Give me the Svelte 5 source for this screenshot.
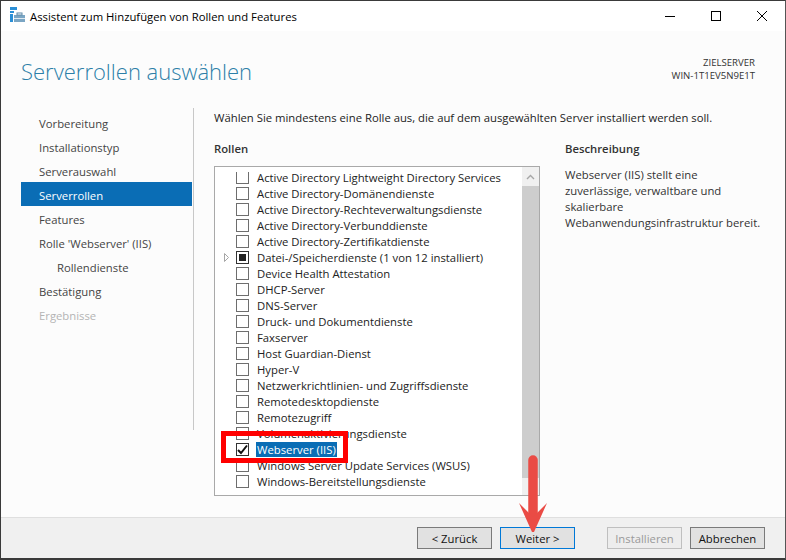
<script>
  const nav = [
    { t: 'Vorbereitung' }, { t: 'Installationstyp' }, { t: 'Serverauswahl' },
    { t: 'Serverrollen', active: true }, { t: 'Features' }, { t: "Rolle 'Webserver' (IIS)" },
    { t: 'Rollendienste', sub: true }, { t: 'Bestätigung' }, { t: 'Ergebnisse', off: true }
  ];
  const roles = [
    'Active Directory Lightweight Directory Services', 'Active Directory-Domänendienste',
    'Active Directory-Rechteverwaltungsdienste', 'Active Directory-Verbunddienste',
    'Active Directory-Zertifikatdienste', 'Datei-/Speicherdienste (1 von 12 installiert)',
    'Device Health Attestation', 'DHCP-Server', 'DNS-Server', 'Druck- und Dokumentdienste',
    'Faxserver', 'Host Guardian-Dienst', 'Hyper-V', 'Netzwerkrichtlinien- und Zugriffsdienste',
    'Remotedesktopdienste', 'Remotezugriff', 'Volumenaktivierungsdienste', 'Webserver (IIS)',
    'Windows Server Update Services (WSUS)', 'Windows-Bereitstellungsdienste'
  ];
</script>

<div class="window">
  <header class="titlebar">
    <svg class="appicon" width="16" height="16" viewBox="0 0 16 16">
      <rect x="0" y="0" width="7" height="3" fill="#2b8fd6"/>
      <rect x="0" y="4" width="4" height="2" fill="#2b8fd6"/>
      <rect x="0" y="7" width="3" height="8" fill="#2b8fd6"/>
      <rect x="4" y="8" width="11" height="7" fill="#7ba6c4"/>
      <rect x="7" y="6" width="5" height="2" fill="none" stroke="#5f8aa8"/>
      <rect x="4" y="11" width="11" height="1" fill="#dfe9f0"/>
    </svg>
    <span class="title">Assistent zum Hinzufügen von Rollen und Features</span>
    <div class="caption">
      <svg width="10" height="10" viewBox="0 0 10 10"><path d="M0 5.5H10" stroke="#000"/></svg>
      <svg width="10" height="10" viewBox="0 0 10 10"><rect x=".5" y=".5" width="9" height="9" fill="none" stroke="#000"/></svg>
      <svg width="10" height="10" viewBox="0 0 10 10"><path d="M0 0L10 10M10 0L0 10" stroke="#000"/></svg>
    </div>
  </header>

  <main class="body">
    <div class="head">
      <h1>Serverrollen auswählen</h1>
      <div class="target">ZIELSERVER<br />WIN-1T1EV5N9E1T</div>
    </div>
    <div class="content">
      <nav class="nav">
        {#each nav as n}
          <div class="navitem" class:active={n.active} class:sub={n.sub} class:off={n.off}>{n.t}</div>
        {/each}
      </nav>
      <section class="right">
        <p class="intro">Wählen Sie mindestens eine Rolle aus, die auf dem ausgewählten Server installiert werden soll.</p>
        <div class="cols">
          <div class="rolescol">
            <h2>Rollen</h2>
            <div class="listbox">
              <div class="rows">
                {#each roles as r, i}
                  <div class="row">
                    <span class="exp">
                      {#if i === 5}
                        <svg width="7" height="9" viewBox="0 0 7 9"><path d="M1.5.5L5.5 4.5L1.5 8.5Z" fill="#fff" stroke="#a6a6a6"/></svg>
                      {/if}
                    </span>
                    <span class="box" class:dark={i === 5 || i === 17} class:clipped={i === 0}>
                      {#if i === 5}<span class="fill"></span>{/if}
                      {#if i === 17}
                        <svg width="11" height="11" viewBox="0 0 11 11"><path d="M1 6L4 9L10 1.5" fill="none" stroke="#111" stroke-width="2"/></svg>
                      {/if}
                    </span>
                    <span class="label" class:sel={i === 17}>{r}</span>
                  </div>
                {/each}
              </div>
              <div class="scrollbar">
                <div class="sbtn">
                  <svg width="9" height="6" viewBox="0 0 9 6"><path d="M1 5L4.5 1.5L8 5" fill="none" stroke="#a6a6a6" stroke-width="1.4"/></svg>
                </div>
                <div class="thumb"></div>
                <div class="sbtn low"></div>
              </div>
            </div>
          </div>
          <aside class="desc">
            <h2>Beschreibung</h2>
            <p>Webserver (IIS) stellt eine zuverlässige, verwaltbare und skalierbare Webanwendungsinfrastruktur bereit.</p>
          </aside>
        </div>
      </section>
    </div>
  </main>

  <footer class="footer">
    <button class="btn">&lt; Zurück</button>
    <button class="btn focus">Weiter &gt;</button>
    <button class="btn disabled">Installieren</button>
    <button class="btn">Abbrechen</button>
  </footer>

  <div class="redbox"></div>
  <svg class="arrow" width="40" height="80" viewBox="0 0 40 80">
    <path d="M20 5V60" stroke="#ea4b45" stroke-width="9.5" stroke-linecap="round" fill="none"/>
    <path d="M6 48L20 62L34 48L21 77H19Z" fill="#ea4b45"/>
  </svg>
</div>

<style>
  :global(body) { margin: 0; background: #fff; }
  * { box-sizing: border-box; }
  .window {
    position: relative; width: 786px; height: 560px; overflow: hidden;
    background: #fcfcfc; display: flex; flex-direction: column;
    font-family: "Open Sans", "Noto Sans", sans-serif; font-size: 11.3px; color: #1e1e1e;
    border: 1px solid #3a3a3a; border-bottom-width: 2px; border-right-color: #555;
  }
  .titlebar { height: 30px; background: #fff; display: flex; align-items: center; padding-left: 9px; flex: none; }
  .appicon { margin-right: 4px; margin-top: -2px; }
  .title { color: #000; flex: 1; }
  .caption { display: flex; gap: 36px; padding-right: 18px; margin-top: -1px; }
  .body { flex: 1; display: flex; flex-direction: column; min-height: 0; }
  .head { height: 77px; display: flex; justify-content: space-between; padding: 0 30px 0 20px; flex: none; }
  h1 { margin: 20px 0 0; font-size: 22px; font-weight: 300; color: #2d7fa8; line-height: 40px; }
  .target { text-align: right; font-size: 9.6px; line-height: 13px; padding-top: 25px; color: #333; }
  .content { flex: 1; display: flex; min-height: 0; }
  .nav { width: 173px; margin-left: 20px; padding-top: 2px; height: 322px; border-right: 1px solid #c8c8c8; flex: none; }
  .navitem { height: 24px; line-height: 27px; padding-left: 18px; color: #444; width: 171px; }
  .navitem.active { background: #0a6db5; color: #fff; }
  .navitem.sub { padding-left: 36px; }
  .navitem.off { color: #b4b4b4; }
  .right { margin-left: 20px; width: 552px; }
  .intro { margin: 0; height: 32px; line-height: 19px; color: #222; white-space: nowrap; }
  .cols { display: flex; }
  .rolescol { width: 351px; }
  h2 { margin: 0; font-size: 11.3px; font-weight: 600; line-height: 17px; color: #333; height: 26px; }
  .listbox { width: 326px; height: 330px; border: 1px solid #a9a9a9; background: #fff; display: flex; overflow: hidden; }
  .rows { flex: 1; padding-top: 2px; }
  .row { height: 16px; display: flex; white-space: nowrap; }
  .exp { width: 21px; padding-left: 8px; flex: none; display: flex; align-items: center; }
  .box { width: 13px; height: 13px; margin-top: 2px; border: 1px solid #6e6e6e; background: #fff; flex: none; margin-right: 7px; display: flex; align-items: center; justify-content: center; }
  .box.clipped { border-top: 0; height: 12px; margin-top: 3px; }
  .box.dark { border-color: #333; }
  .fill { width: 7px; height: 7px; background: #222; }
  .label { color: #222; padding: 0 1px; line-height: 16px; height: 15px; margin-top: 1px; }
  .label.sel { background: #0a6db5; color: #fff; }
  .scrollbar { width: 17px; flex: none; background: #f0f0f0; display: flex; flex-direction: column; }
  .sbtn { height: 19px; display: flex; align-items: center; justify-content: center; flex: none; }
  .sbtn.low { height: 17px; }
  .thumb { flex: 1; background: #cdcdcd; }
  .desc { width: 198px; }
  .desc p { margin: 1px 0 0; line-height: 16px; color: #333; }
  .footer { position: absolute; left: 0; right: 0; bottom: 0; height: 41px; background: #f0f0f0; border-top: 1px solid #dfdfdf; display: flex; align-items: center; padding-left: 416px; gap: 8px; }
  .btn { width: 75px; height: 22px; background: #e1e1e1; border: 1px solid #7a7a7a; font: inherit; color: #111; padding: 0; }
  .btn.focus { border-color: #0078d7; margin-right: 24px; }
  .btn.disabled { background: #ededed; border-color: #bfbfbf; color: #9a9a9a; }
  .redbox { position: absolute; left: 220px; top: 430px; width: 127px; height: 32px; border: 5px solid #f00; }
  .arrow { position: absolute; left: 512px; top: 454px; }
</style>
